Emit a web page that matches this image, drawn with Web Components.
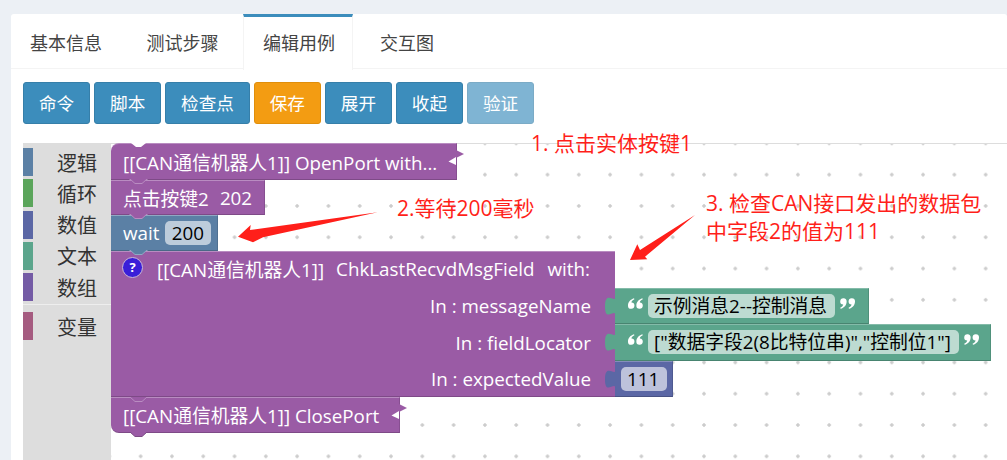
<!DOCTYPE html>
<html>
<head>
<meta charset="utf-8">
<style>
  html, body { margin: 0; height: 100%; }
  body {
    background: #ecf0f5;
    overflow: hidden;
    font-family: "Open Sans", "Noto Sans CJK SC", sans-serif;
    padding: 14px 0 0 11px;
    box-sizing: border-box;
  }
</style>
</head>
<body>
<case-panel>
  <tab-bar slot="tabs">
    <tab-item>基本信息</tab-item>
    <tab-item>测试步骤</tab-item>
    <tab-item active>编辑用例</tab-item>
    <tab-item>交互图</tab-item>
  </tab-bar>
  <tool-bar slot="tools">
    <tool-button>命令</tool-button>
    <tool-button>脚本</tool-button>
    <tool-button>检查点</tool-button>
    <tool-button kind="warning">保存</tool-button>
    <tool-button>展开</tool-button>
    <tool-button>收起</tool-button>
    <tool-button disabled>验证</tool-button>
  </tool-bar>
  <block-workspace slot="workspace">
    <block-toolbox slot="toolbox">
      <toolbox-row color="#5b80a5">逻辑</toolbox-row>
      <toolbox-row color="#5ba55b">循环</toolbox-row>
      <toolbox-row color="#5b67a5">数值</toolbox-row>
      <toolbox-row color="#5ba58c">文本</toolbox-row>
      <toolbox-row color="#745ba5">数组</toolbox-row>
      <toolbox-sep></toolbox-sep>
      <toolbox-row color="#a55b80">变量</toolbox-row>
    </block-toolbox>
    <block-stack slot="blocks">
      <stack-block hat flag width="346" height="37">[[CAN通信机器人1]] OpenPort with...</stack-block>
      <stack-block width="154" height="35">点击按键2<span style="margin-left:11px">202</span></stack-block>
      <stack-block width="107" height="36" color="#5b80a5">wait&nbsp;<value-field>200</value-field></stack-block>
      <check-block></check-block>
      <stack-block last flag width="289" height="36">[[CAN通信机器人1]] ClosePort</stack-block>
    </block-stack>
    <red-note slot="notes" style="left:508px;top:-15px">1. 点击实体按键1</red-note>
    <red-note slot="notes" style="left:374px;top:50px">2.等待200毫秒</red-note>
    <red-note slot="notes" style="left:683px;top:45px">3. 检查CAN接口发出的数据包<br>中字段2的值为111</red-note>
  </block-workspace>
</case-panel>

<script>
const define = (name, css, html, init) => {
  customElements.define(name, class extends HTMLElement {
    constructor() {
      super();
      this.attachShadow({mode: 'open'});
      this.shadowRoot.innerHTML = `<style>${css}</style>${html}`;
    }
    connectedCallback() { if (init) init(this); }
  });
};

const notch = `<svg class="notch" width="20" height="6"><path d="M1 0 L6 4.5 H13 L18 0 Z" fill="var(--c)"/><path d="M0 0 H1 L6 4.5 H13 L18 0 H19" fill="none" stroke="var(--notch-edge)"/></svg>`;
const quote = `<path d="M5.6 0 C2.4 1.1 0 3.4 0 6.9 A3 3 0 1 0 3.2 4 C3.3 2.9 4.2 1.9 6 1.1 Z"/>`;

define('case-panel', `
  :host { display: block; background: #fff; border-radius: 3px 3px 0 0; height: 446px; overflow: hidden; }
  .tools { padding: 13px 12px 19px; }
`, `
  <slot name="tabs"></slot>
  <div class="tools"><slot name="tools"></slot></div>
  <slot name="workspace"></slot>
`);

define('tab-bar', `
  :host { display: flex; gap: 6.5px; height: 55px; box-sizing: border-box; border-bottom: 1px solid #f4f4f4; }
`, `<slot></slot>`);

define('tab-item', `
  :host { display: block; box-sizing: border-box; width: 110px; height: 55px; padding: 14px 19px 0; font-size: 18px; line-height: 24px; color: #444; border: solid transparent; border-width: 3px 0 0; white-space: nowrap; }
  :host([active]) { border-top-color: #3c8dbc; border-left: 1px solid #f4f4f4; border-right: 1px solid #f4f4f4; background: #fff; height: 56px; margin: 0 1.5px 0 -1px; }
`, `<slot></slot>`);

define('tool-bar', `
  :host { display: flex; gap: 3.85px; }
`, `<slot></slot>`);

define('tool-button', `
  :host { display: block; box-sizing: border-box; height: 42px; padding: 0 15px; line-height: 40px; font-size: 17.6px; color: #fff; background: #3c8dbc; border: 1px solid #367fa9; border-radius: 3px; white-space: nowrap; }
  :host([kind="warning"]) { background: #f39c12; border-color: #e08e0b; }
  :host([disabled]) { opacity: .65; }
`, `<slot></slot>`);

define('block-workspace', `
  :host { display: flex; position: relative; margin-left: 12px; height: 317px; border-top: 1px solid #ddd; }
  .canvas { position: relative; flex: 1; background-image: radial-gradient(circle, #ccc 1.4px, transparent 2px); background-size: 31.3px 31.3px; background-position: 14px 15px; }
  .arrows { position: absolute; left: 0; top: 0; z-index: 3; }
`, `
  <slot name="toolbox"></slot>
  <div class="canvas"><slot name="blocks"></slot></div>
  <svg class="arrows" width="984" height="317">
    <polygon fill="#ff1f1a" points="215,92.7 227.7,81 227,86 354.7,68.3 240,93.3 230,98.3"/>
    <polygon fill="#ff1f1a" points="607,116 614.3,100.3 617,106 672,71 622,112.7 624.3,115.3"/>
  </svg>
  <slot name="notes"></slot>
`);

define('block-toolbox', `
  :host { display: block; box-sizing: border-box; width: 88px; flex: none; background: #ddd; padding-top: 4px; }
`, `<slot></slot>`);

define('toolbox-row', `
  :host { display: flex; align-items: center; height: 28px; margin-bottom: 3.3px; font-size: 20px; color: #333; }
  i { display: block; width: 10px; height: 28px; margin-right: 24px; }
`, `<i></i><slot></slot>`, el => {
  el.shadowRoot.querySelector('i').style.background = el.getAttribute('color');
});

define('toolbox-sep', `
  :host { display: block; height: 1px; background: #eee; margin: 3px 0 6.9px; }
`, ``);

define('block-stack', `
  :host { display: flex; flex-direction: column; align-items: flex-start; position: absolute; left: 0; top: -1px; z-index: 1; }
`, `<slot></slot>`);

define('stack-block', `
  :host { display: flex; align-items: center; position: relative; box-sizing: border-box; --c: #9a5ba5; --edge: #b98cc1; --notch-edge: #b98cc1; background: var(--c); color: #fff; font-size: 18.8px; padding: 0 12px; white-space: nowrap; border-top: 1px solid var(--edge); border-bottom: 1px solid rgba(0,0,0,.18); border-right: 1px solid rgba(0,0,0,.12); }
  :host([last]) { border-radius: 0 0 0 8px; }
  :host([hat]) { border-radius: 8px 0 0 0; }
  .notch { position: absolute; left: 18px; bottom: -6px; z-index: 2; }
  .cut { position: absolute; left: 18px; top: -1px; display: none; }
  .flag { position: absolute; right: -9px; top: 6px; display: none; }
`, `<slot></slot>${notch}
   <svg class="cut" width="20" height="5"><path d="M2 0 L7 4 H12 L17 0 Z" fill="#fff"/></svg>
   <svg class="flag" width="17" height="22" viewBox="0 0 17 22"><path d="M8 0 L16 4 L8 8 Z" fill="#9a5ba5"/><path d="M8 7 L0.5 11.5 L8 15 Z" fill="#fff"/></svg>`, el => {
  el.style.width = el.getAttribute('width') + 'px';
  el.style.height = el.getAttribute('height') + 'px';
  const color = el.getAttribute('color');
  if (color) {
    el.style.setProperty('--c', color);
    el.style.setProperty('--edge', '#8fa9c4');
    el.style.setProperty('--notch-edge', '#8fa9c4');
  }
  if (el.hasAttribute('flag')) el.shadowRoot.querySelector('.flag').style.display = 'block';
  if (el.hasAttribute('hat')) el.shadowRoot.querySelector('.cut').style.display = 'block';
  if (el.hasAttribute('last')) el.style.setProperty('--notch-edge', '#7b4984');
});

define('value-field', `
  :host { display: inline-block; background: rgba(255,255,255,.6); color: #000; border-radius: 5px; line-height: 24px; padding: 0 6.5px; margin-left: 1px; }
`, `<slot></slot>`);

define('check-block', `
  :host { display: grid; grid-template-columns: 504px max-content; position: relative; width: 504px; height: 146px; --c: #9a5ba5; --edge: #b98cc1; --notch-edge: #b98cc1; color: #fff; font-size: 18.8px; white-space: nowrap; }
  .body { box-sizing: border-box; height: 146px; background: var(--c); border-top: 1px solid var(--edge); border-bottom: 1px solid rgba(0,0,0,.18); padding-right: 24px; }
  .head { display: flex; align-items: center; height: 36px; padding: 0 0 2px 11px; box-sizing: border-box; }
  .badge { flex: none; width: 21px; height: 21px; box-sizing: border-box; border-radius: 50%; background: #3a1fd8; border: 1px solid #c9b8d8; font: 700 13px/19px "Open Sans", sans-serif; text-align: center; margin: 0 14px 3px 0; }
  .head b { font-weight: 400; margin-left: 12px; }
  .head u { text-decoration: none; margin-left: 13px; }
  .row { height: 36.7px; line-height: 36px; text-align: right; }
  .plugs { display: flex; flex-direction: column; align-items: flex-start; padding-top: 37px; }
  .notch { position: absolute; left: 18px; bottom: -6px; z-index: 2; }
`, `
  <div class="body">
    <div class="head"><div class="badge">?</div>[[CAN通信机器人1]]<b>ChkLastRecvdMsgField</b><u>with:</u></div>
    <div class="row">In : messageName</div>
    <div class="row">In : fieldLocator</div>
    <div class="row">In : expectedValue</div>
  </div>
  <div class="plugs">
    <plug-value color="#5ba58c" width="254" quoted>示例消息2--控制消息</plug-value>
    <plug-value color="#5ba58c" width="376" quoted>["数据字段2(8比特位串)","控制位1"]</plug-value>
    <plug-value color="#5b67a5" width="58">111</plug-value>
  </div>
  ${notch}
`);

define('plug-value', `
  :host { display: flex; align-items: center; position: relative; box-sizing: border-box; height: 36.3px; background: var(--c); padding-left: 6px; border-top: 1px solid rgba(255,255,255,.25); border-bottom: 1px solid rgba(0,0,0,.2); border-right: 1px solid rgba(0,0,0,.12); color: #000; font-size: 18.8px; white-space: nowrap; }
  :host([quoted]) { padding-left: 13px; }
  .tab { position: absolute; left: -11px; top: 6px; }
  .q { flex: none; fill: #fff; }
  .open { margin: 0 5px 6px 0; }
  .close { margin: 0 0 6px 5px; transform: rotate(180deg); }
  .f { background: rgba(255,255,255,.6); border-radius: 5px; line-height: 24px; padding: 0 8px 0 6px; }
`, `
  <svg class="tab" width="12" height="24"><path d="M12 1 c0,9 -11,-7 -11,10.5 s11,-1 11,10.5 z" fill="var(--c)"/></svg>
  <svg class="q open" width="15" height="11" viewBox="0 0 14 10">${quote}<g transform="translate(7.8)">${quote}</g></svg>
  <div class="f"><slot></slot></div>
  <svg class="q close" width="15" height="11" viewBox="0 0 14 10">${quote}<g transform="translate(7.8)">${quote}</g></svg>`, el => {
  el.style.setProperty('--c', el.getAttribute('color'));
  el.style.width = el.getAttribute('width') + 'px';
  if (!el.hasAttribute('quoted')) el.shadowRoot.querySelectorAll('.q').forEach(q => q.remove());
});

define('red-note', `
  :host { display: block; position: absolute; z-index: 3; color: #ff1f1a; font-size: 21px; line-height: 28px; white-space: nowrap; }
`, `<slot></slot>`);
</script>
</body>
</html>
